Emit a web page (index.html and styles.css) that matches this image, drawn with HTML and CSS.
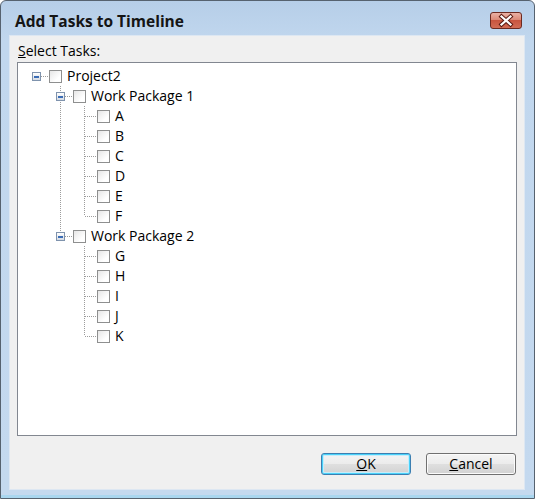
FILE: index.html
```html
<!DOCTYPE html>
<html>
<head>
<meta charset="utf-8">
<link rel="stylesheet" href="styles.css">
</head>
<body>
<div class="window">
  <div class="titlebar">
    <span class="title">Add Tasks to Timeline</span>
    <span class="close">
      <svg width="30" height="15" viewBox="0 0 30 15">
        <path d="M10.5 3.5 L19.5 11.5 M19.5 3.5 L10.5 11.5" stroke="#5a1a12" stroke-width="4.2" stroke-linecap="square"/>
        <path d="M10.5 3.5 L19.5 11.5 M19.5 3.5 L10.5 11.5" stroke="#ffffff" stroke-width="2.2" stroke-linecap="square"/>
      </svg>
    </span>
  </div>
  <div class="client">
    <div class="label"><u>S</u>elect Tasks:</div>
    <div class="tree">
      <div class="row"><span class="c h"><span class="exp"></span></span><span class="cb"></span><span class="txt">Project2</span></div>
      <div class="row"><span class="c"></span><span class="c t"><span class="exp"></span></span><span class="cb"></span><span class="txt">Work Package 1</span></div>
      <div class="row"><span class="c"></span><span class="c v"></span><span class="c t"></span><span class="cb"></span><span class="txt">A</span></div>
      <div class="row"><span class="c"></span><span class="c v"></span><span class="c t"></span><span class="cb"></span><span class="txt">B</span></div>
      <div class="row"><span class="c"></span><span class="c v"></span><span class="c t"></span><span class="cb"></span><span class="txt">C</span></div>
      <div class="row"><span class="c"></span><span class="c v"></span><span class="c t"></span><span class="cb"></span><span class="txt">D</span></div>
      <div class="row"><span class="c"></span><span class="c v"></span><span class="c t"></span><span class="cb"></span><span class="txt">E</span></div>
      <div class="row"><span class="c"></span><span class="c v"></span><span class="c l"></span><span class="cb"></span><span class="txt">F</span></div>
      <div class="row"><span class="c"></span><span class="c l"><span class="exp"></span></span><span class="cb"></span><span class="txt">Work Package 2</span></div>
      <div class="row"><span class="c"></span><span class="c"></span><span class="c t"></span><span class="cb"></span><span class="txt">G</span></div>
      <div class="row"><span class="c"></span><span class="c"></span><span class="c t"></span><span class="cb"></span><span class="txt">H</span></div>
      <div class="row"><span class="c"></span><span class="c"></span><span class="c t"></span><span class="cb"></span><span class="txt">I</span></div>
      <div class="row"><span class="c"></span><span class="c"></span><span class="c t"></span><span class="cb"></span><span class="txt">J</span></div>
      <div class="row"><span class="c"></span><span class="c"></span><span class="c l"></span><span class="cb"></span><span class="txt">K</span></div>
    </div>
    <div class="buttons">
      <span class="btn default"><u>O</u>K</span>
      <span class="btn"><u>C</u>ancel</span>
    </div>
  </div>
</div>
</body>
</html>
```

FILE: styles.css
```css
html, body {
  margin: 0;
  padding: 0;
  background: #ffffff;
}

body {
  font-family: "Open Sans", "Noto Sans", sans-serif;
  --dv: repeating-linear-gradient(to bottom, #9c9c9c 0 1px, transparent 1px 2px);
  --dh: repeating-linear-gradient(to right, #9c9c9c 0 1px, transparent 1px 2px);
}

.window {
  width: 535px;
  height: 499px;
  box-sizing: border-box;
  border: 1px solid #56626f;
  border-radius: 6px 6px 0 0;
  background: linear-gradient(to bottom, #b6cee8 0, #c1d7ee 40px, #c4d9ef calc(100% - 3px), #a9d6ef calc(100% - 3px));
  display: flex;
  flex-direction: column;
}

.titlebar {
  height: 34px;
  flex: none;
  display: flex;
  align-items: center;
  padding-left: 14px;
  padding-right: 12px;
}

.title {
  font-weight: bold;
  font-size: 15.5px;
  color: #151515;
  margin-top: 5px;
}

.close {
  margin-left: auto;
  margin-top: 4px;
  width: 32px;
  height: 17px;
  box-sizing: border-box;
  border: 1px solid #6c2a21;
  border-radius: 3px;
  background: linear-gradient(to bottom, #eab1a5 0%, #dc8a78 45%, #c9553f 50%, #d26c55 100%);
  display: flex;
  align-items: center;
  justify-content: center;
}

.close svg {
  display: block;
}

.client {
  flex: 1;
  margin: 0 9px 9px 8px;
  border: 1px solid #dde7f2;
  background: #f0f0f0;
  padding: 6px 7px 14px 7px;
  display: flex;
  flex-direction: column;
}

.label {
  font-size: 14px;
  line-height: 17px;
  height: 17px;
  color: #000;
  padding-left: 1px;
}

.tree {
  margin-top: 3px;
  height: 374px;
  box-sizing: border-box;
  border: 1px solid #828790;
  background: #ffffff;
  padding: 3px 0 0 6px;
}

.row {
  display: flex;
  align-items: center;
  height: 20px;
}

.c {
  flex: none;
  width: 24px;
  height: 20px;
  box-sizing: border-box;
  padding-left: 8px;
  display: flex;
  align-items: flex-start;
}

.v {
  background: var(--dv) 12px 0 / 1px 20px no-repeat;
}

.t {
  background: var(--dh) 13px 10px / 11px 1px no-repeat, var(--dv) 12px 0 / 1px 20px no-repeat;
}

.l {
  background: var(--dh) 13px 10px / 11px 1px no-repeat, var(--dv) 12px 0 / 1px 10px no-repeat;
}

.h {
  background: var(--dh) 13px 10px / 11px 1px no-repeat;
}

.exp {
  width: 9px;
  height: 9px;
  margin-top: 6px;
  box-sizing: border-box;
  border: 1px solid #7f93ad;
  background: linear-gradient(to bottom, #ffffff, #d5dbe3);
  display: flex;
  align-items: center;
  justify-content: center;
}

.exp::after {
  content: "";
  width: 5px;
  height: 2px;
  background: #3a6cb5;
}

.cb {
  flex: none;
  width: 13px;
  height: 13px;
  margin-left: 1px;
  margin-top: 1px;
  box-sizing: border-box;
  border: 1px solid #8e8f8f;
  background: linear-gradient(135deg, #e6e6e6, #ffffff 70%);
}

.txt {
  margin-left: 5px;
  font-size: 14px;
  line-height: 20px;
  color: #000;
  white-space: nowrap;
}

.buttons {
  margin-top: 17px;
  display: flex;
  justify-content: flex-end;
  gap: 15px;
  padding-right: 1px;
}

.btn {
  width: 90px;
  height: 22px;
  box-sizing: border-box;
  border: 1px solid #707070;
  border-radius: 3px;
  background: linear-gradient(to bottom, #f4f4f4 0%, #ececec 48%, #dfdfdf 52%, #d2d2d2 100%);
  box-shadow: inset 0 0 0 1px #fbfbfb;
  font-size: 14px;
  line-height: 20px;
  text-align: center;
  color: #000;
}

.btn.default {
  border-color: #3c7fb1;
  box-shadow: inset 0 0 0 1px #49d1f9, inset 0 0 0 2px #c6ecfa;
}
```
